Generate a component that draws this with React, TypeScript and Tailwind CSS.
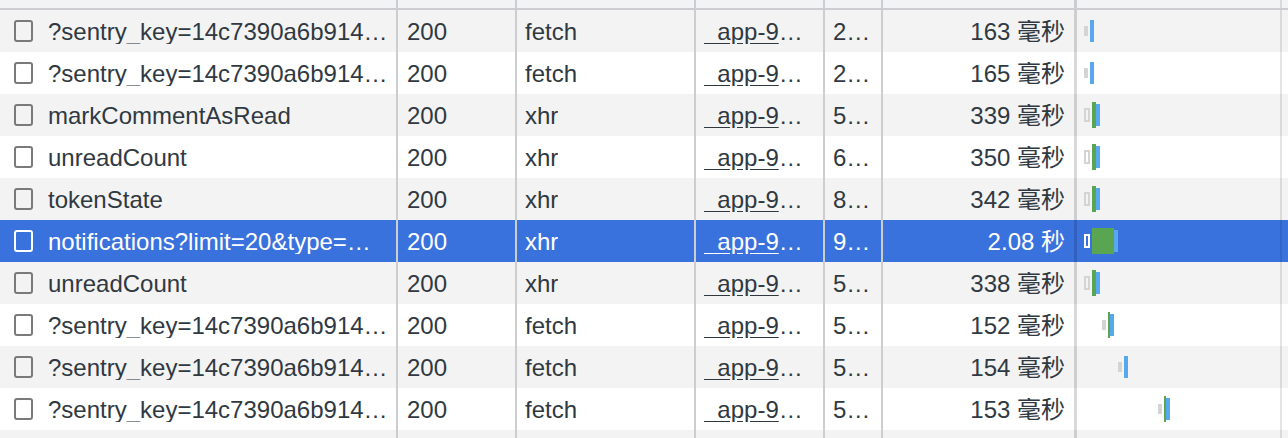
import type { CSSProperties } from "react";

type Bar = { kind: "gray" | "outline" | "green" | "blue"; left: number; w: number; top: number; h: number };

type Req = {
  name: string;
  status: string;
  type: string;
  initiator: string;
  size: string;
  time: string;
  bars: Bar[];
  selected?: boolean;
};

const ping: Bar[] = [
  { kind: "gray", left: 7, w: 4, top: 16, h: 10 },
  { kind: "blue", left: 13, w: 4, top: 10, h: 22 },
];

const xhr: Bar[] = [
  { kind: "outline", left: 7, w: 6, top: 14, h: 14 },
  { kind: "green", left: 15, w: 4, top: 8, h: 26 },
  { kind: "blue", left: 19, w: 4, top: 10, h: 22 },
];

const sentry = "?sentry_key=14c7390a6b9148d2a1f0c3e5b7d9a2c4";

const requests: Req[] = [
  { name: sentry, status: "200", type: "fetch", initiator: "_app-9f3c2a1b.js", size: "248 B", time: "163 毫秒", bars: ping },
  { name: sentry, status: "200", type: "fetch", initiator: "_app-9f3c2a1b.js", size: "248 B", time: "165 毫秒", bars: ping },
  { name: "markCommentAsRead", status: "200", type: "xhr", initiator: "_app-9f3c2a1b.js", size: "527 B", time: "339 毫秒", bars: xhr },
  { name: "unreadCount", status: "200", type: "xhr", initiator: "_app-9f3c2a1b.js", size: "613 B", time: "350 毫秒", bars: xhr },
  { name: "tokenState", status: "200", type: "xhr", initiator: "_app-9f3c2a1b.js", size: "842 B", time: "342 毫秒", bars: xhr },
  {
    name: "notifications?limit=20&type=WEB",
    status: "200",
    type: "xhr",
    initiator: "_app-9f3c2a1b.js",
    size: "9.4 kB",
    time: "2.08 秒",
    selected: true,
    bars: [
      { kind: "outline", left: 7, w: 6, top: 14, h: 14 },
      { kind: "green", left: 15, w: 22, top: 8, h: 26 },
      { kind: "blue", left: 37, w: 4, top: 10, h: 22 },
    ],
  },
  { name: "unreadCount", status: "200", type: "xhr", initiator: "_app-9f3c2a1b.js", size: "527 B", time: "338 毫秒", bars: xhr },
  {
    name: sentry,
    status: "200",
    type: "fetch",
    initiator: "_app-9f3c2a1b.js",
    size: "512 B",
    time: "152 毫秒",
    bars: [
      { kind: "gray", left: 25, w: 4, top: 16, h: 10 },
      { kind: "green", left: 31, w: 2, top: 8, h: 26 },
      { kind: "blue", left: 33, w: 4, top: 10, h: 22 },
    ],
  },
  {
    name: sentry,
    status: "200",
    type: "fetch",
    initiator: "_app-9f3c2a1b.js",
    size: "512 B",
    time: "154 毫秒",
    bars: [
      { kind: "gray", left: 41, w: 4, top: 16, h: 10 },
      { kind: "blue", left: 47, w: 4, top: 10, h: 22 },
    ],
  },
  {
    name: sentry,
    status: "200",
    type: "fetch",
    initiator: "_app-9f3c2a1b.js",
    size: "512 B",
    time: "153 毫秒",
    bars: [
      { kind: "gray", left: 81, w: 4, top: 16, h: 10 },
      { kind: "green", left: 87, w: 2, top: 8, h: 26 },
      { kind: "blue", left: 89, w: 4, top: 10, h: 22 },
    ],
  },
];

function barClass(kind: Bar["kind"], selected?: boolean) {
  if (kind === "blue") return "bg-[#57a8ef]";
  if (kind === "green") return "bg-[#59a552]";
  if (kind === "gray") return "bg-[#d4d4d4]";
  return selected ? "border-2 border-white" : "border-2 border-[#d4d4d4]";
}

function Waterfall({ bars, selected }: { bars: Bar[]; selected?: boolean }) {
  return (
    <div className="relative h-full w-[205px] shrink-0 border-r-2 border-black/10">
      {bars.map((b, i) => {
        const style: CSSProperties = { left: b.left, top: b.top, width: b.w, height: b.h };
        return <div key={i} className={`absolute ${barClass(b.kind, selected)}`} style={style} />;
      })}
    </div>
  );
}

function Row({ req, striped }: { req?: Req; striped: boolean }) {
  const selected = req?.selected;
  const bg = selected ? "bg-[#3a72dd] text-white" : striped ? "bg-[#f3f3f3] text-[#303942]" : "bg-white text-[#303942]";
  return (
    <div className={`flex h-[42px] shrink-0 items-center ${bg}`}>
      <div className="flex h-full w-[398px] shrink-0 items-center border-r-2 border-[#cbcdd1] pl-[14px] pr-[8px]">
        {req && (
          <span
            className={`h-[22px] w-[19px] shrink-0 rounded-[3px] border-2 ${
              selected ? "border-white" : "border-[#7a7a7a]"
            }`}
          />
        )}
        <span className="ml-[15px] min-w-0 truncate pt-[1px]">{req?.name}</span>
      </div>
      <div className="flex h-full w-[119px] shrink-0 items-center border-r-2 border-[#cbcdd1] pl-[9px] pr-2 pt-[1px]">
        <span className="truncate">{req?.status}</span>
      </div>
      <div className="flex h-full w-[179px] shrink-0 items-center border-r-2 border-[#cbcdd1] pl-[8px] pr-2 pt-[1px]">
        <span className="truncate">{req?.type}</span>
      </div>
      <div className="flex h-full w-[129px] shrink-0 items-center border-r-2 border-[#cbcdd1] pl-[8px] pr-[16px] pt-[1px]">
        <span className="min-w-0 truncate underline underline-offset-[3px]">{req?.initiator}</span>
      </div>
      <div className="flex h-full w-[58px] shrink-0 items-center border-r-2 border-[#cbcdd1] pl-[8px] pr-[6px] pt-[1px]">
        <span className="min-w-0 truncate">{req?.size}</span>
      </div>
      <div className="flex h-full w-[194px] shrink-0 items-center justify-end border-r-[3px] border-black/15 pr-[9px] pt-[1px]">
        <span className="truncate">{req?.time}</span>
      </div>
      <Waterfall bars={req?.bars ?? []} selected={selected} />
      <div className="h-full flex-1" />
    </div>
  );
}

function HeaderStrip() {
  return (
    <div className="flex h-[10px] shrink-0 border-b-2 border-[#cbcdd1] bg-[#f1f3f4]">
      <div className="w-[398px] shrink-0 border-r-2 border-[#cbcdd1]" />
      <div className="w-[119px] shrink-0 border-r-2 border-[#cbcdd1]" />
      <div className="w-[179px] shrink-0 border-r-2 border-[#cbcdd1]" />
      <div className="w-[129px] shrink-0 border-r-2 border-[#cbcdd1]" />
      <div className="w-[58px] shrink-0 border-r-2 border-[#cbcdd1]" />
      <div className="w-[194px] shrink-0 border-r-[3px] border-[#cbcdd1]" />
      <div className="w-[205px] shrink-0 border-r-2 border-black/10" />
      <div className="flex-1" />
    </div>
  );
}

export default function App() {
  return (
    <div
      className="flex h-[438px] w-[1288px] flex-col overflow-hidden bg-white text-[24px] leading-none"
      style={{ fontFamily: '"Liberation Sans", "Noto Sans CJK SC", Arial, sans-serif' }}
    >
      <HeaderStrip />
      {requests.map((r, i) => (
        <Row key={i} req={r} striped={i % 2 === 0} />
      ))}
      <Row striped />
    </div>
  );
}
